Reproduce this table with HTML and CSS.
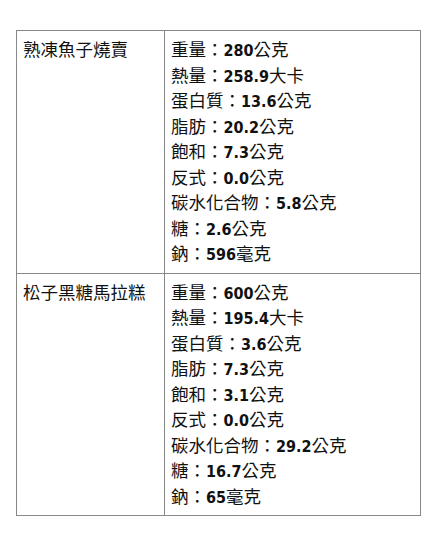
FILE: index.html
```html
<!DOCTYPE html>
<html>
<head>
<meta charset="utf-8">
<link rel="stylesheet" href="styles.css">
</head>
<body>
<table class="nutri">
  <tr>
    <td class="name">熟凍魚子燒賣</td>
    <td class="facts">
      <div>重量：<span class="n">280</span>公克</div>
      <div>熱量：<span class="n">258.9</span>大卡</div>
      <div>蛋白質：<span class="n">13.6</span>公克</div>
      <div>脂肪：<span class="n">20.2</span>公克</div>
      <div>飽和：<span class="n">7.3</span>公克</div>
      <div>反式：<span class="n">0.0</span>公克</div>
      <div>碳水化合物：<span class="n">5.8</span>公克</div>
      <div>糖：<span class="n">2.6</span>公克</div>
      <div>鈉：<span class="n">596</span>毫克</div>
    </td>
  </tr>
  <tr>
    <td class="name">松子黑糖馬拉糕</td>
    <td class="facts">
      <div>重量：<span class="n">600</span>公克</div>
      <div>熱量：<span class="n">195.4</span>大卡</div>
      <div>蛋白質：<span class="n">3.6</span>公克</div>
      <div>脂肪：<span class="n">7.3</span>公克</div>
      <div>飽和：<span class="n">3.1</span>公克</div>
      <div>反式：<span class="n">0.0</span>公克</div>
      <div>碳水化合物：<span class="n">29.2</span>公克</div>
      <div>糖：<span class="n">16.7</span>公克</div>
      <div>鈉：<span class="n">65</span>毫克</div>
    </td>
  </tr>
</table>
</body>
</html>
```
FILE: styles.css
```css
html, body {
  margin: 0;
  padding: 0;
  background: #fff;
}
body {
  padding: 30px 0 0 16px;
  font-family: "Noto Sans CJK TC", "Noto Sans CJK SC", sans-serif;
  font-size: 17.5px;
  line-height: 25.5px;
  color: #111;
}
.nutri {
  border-collapse: collapse;
  width: 405px;
}
.nutri td {
  border: 1px solid #888;
  vertical-align: top;
  padding: 5px 6px 7px 6px;
}
.nutri td.name {
  width: 135px;
}
.facts div {
  height: 25.5px;
}
.n {
  font-family: "DejaVu Sans Condensed", "DejaVu Sans", sans-serif;
  font-weight: bold;
  font-size: 16px;
  line-height: 1;
}
```
